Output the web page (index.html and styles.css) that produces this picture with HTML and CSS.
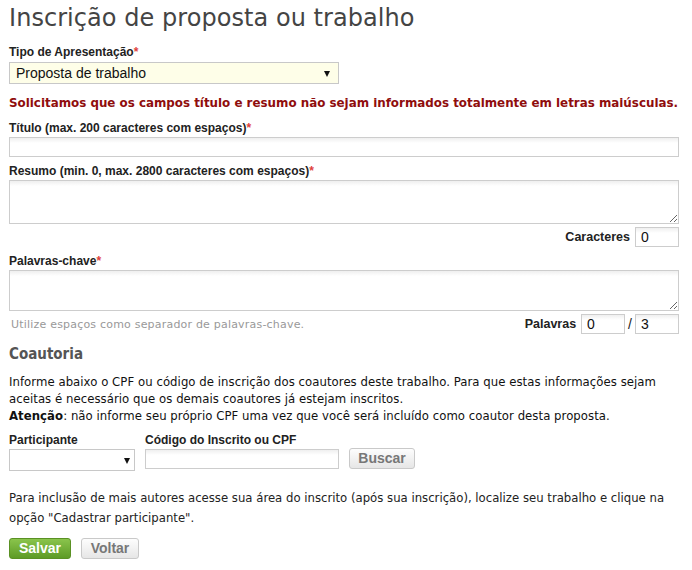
FILE: index.html
```html
<!DOCTYPE html>
<html lang="pt-BR">
<head>
<meta charset="utf-8">
<title>Inscrição de proposta ou trabalho</title>
<link rel="stylesheet" href="styles.css">
</head>
<body>
<div class="page">
  <h1 class="title">Inscrição de proposta ou trabalho</h1>

  <div class="field">
    <label class="lbl">Tipo de Apresentação<span class="req">*</span></label>
    <span class="select-wrap select-tipo">
      <select class="select yellow"><option>Proposta de trabalho</option></select>
    </span>
  </div>

  <p class="warning">Solicitamos que os campos título e resumo não sejam informados totalmente em letras maiúsculas.</p>

  <div class="field">
    <label class="lbl">Título (max. 200 caracteres com espaços)<span class="req">*</span></label>
    <input class="input full" type="text">
  </div>

  <div class="field">
    <label class="lbl">Resumo (min. 0, max. 2800 caracteres com espaços)<span class="req">*</span></label>
    <textarea class="input full area-resumo"></textarea>
    <div class="counter-row">
      <span class="lbl-inline">Caracteres</span>
      <input class="input small" type="text" value="0">
    </div>
  </div>

  <div class="field kw">
    <label class="lbl">Palavras-chave<span class="req">*</span></label>
    <textarea class="input full area-kw"></textarea>
    <div class="counter-row split">
      <span class="hint">Utilize espaços como separador de palavras-chave.</span>
      <span class="counter-group">
        <span class="lbl-inline">Palavras</span>
        <input class="input small" type="text" value="0">
        <span class="slash">/</span>
        <input class="input small" type="text" value="3">
      </span>
    </div>
  </div>

  <h2 class="section">Coautoria</h2>
  <p class="info">Informe abaixo o CPF ou código de inscrição dos coautores deste trabalho. Para que estas informações sejam aceitas é necessário que os demais coautores já estejam inscritos.<br><b>Atenção</b>: não informe seu próprio CPF uma vez que você será incluído como coautor desta proposta.</p>

  <div class="coauthor-row">
    <div class="col">
      <label class="lbl">Participante</label>
      <span class="select-wrap select-part">
        <select class="select"><option></option></select>
      </span>
    </div>
    <div class="col">
      <label class="lbl">Código do Inscrito ou CPF</label>
      <input class="input cpf" type="text">
    </div>
    <div class="col btn-col">
      <button class="btn" type="button">Buscar</button>
    </div>
  </div>

  <p class="note">Para inclusão de mais autores acesse sua área do inscrito (após sua inscrição), localize seu trabalho e clique na opção "Cadastrar participante".</p>

  <div class="actions">
    <button class="btn btn-green" type="button">Salvar</button>
    <button class="btn btn-back" type="button">Voltar</button>
  </div>
</div>
</body>
</html>
```

FILE: styles.css
```css
* { box-sizing: border-box; }
html, body { margin: 0; padding: 0; background: #fff; }
body { font-family: "Liberation Sans", Arial, sans-serif; color: #222; }

.page { padding: 3px 13px 0 9px; width: 692px; }

.title {
  font-family: "DejaVu Sans", Verdana, sans-serif;
  font-weight: normal;
  font-size: 24px;
  color: #444;
  margin: 0 0 12px 0;
  line-height: 30px;
  letter-spacing: 0.05px;
}

.field { display: flex; flex-direction: column; align-items: flex-start; }

.lbl {
  display: block;
  font-family: "Liberation Sans", Arial, sans-serif;
  font-weight: bold;
  font-size: 12px;
  line-height: 14px;
  color: #222;
  margin-bottom: 2px;
}
.req { color: #e0413a; }

.select-wrap { position: relative; display: inline-block; }
.select-wrap::after {
  content: "";
  position: absolute;
  top: 50%;
  margin-top: -2px;
  width: 0; height: 0;
  border-left: 3.5px solid transparent;
  border-right: 3.5px solid transparent;
  border-top: 6px solid #111;
  pointer-events: none;
}
.select {
  -webkit-appearance: none;
  appearance: none;
  display: block;
  border: 1px solid #c8c8c8;
  background: #fff;
  font-family: "Liberation Sans", Arial, sans-serif;
  font-size: 14px;
  color: #111;
  padding: 0 6px;
  border-radius: 0;
  margin: 0;
}
.select.yellow { background: #fefee8; }
.select-tipo { margin-top: 1px; }
.select-tipo .select { width: 330px; height: 22px; }
.select-tipo::after { right: 9px; }
.select-part .select { width: 126px; height: 22px; }
.select-part::after { right: 5px; }

.warning {
  font-family: "DejaVu Sans", Verdana, sans-serif;
  font-weight: bold;
  font-size: 11.88px;
  color: #8f0d0d;
  margin: 11px -10px 10px 0;
  line-height: 16px;
}

.input {
  border: 1px solid #cdcdcd;
  background: linear-gradient(#efefef, #fff 5px);
  font-family: "Liberation Sans", Arial, sans-serif;
  font-size: 14px;
  color: #111;
  padding: 0 5px;
  margin: 0;
  border-radius: 0;
  outline: none;
}
.full { width: 670px; }
input.full { height: 20px; margin-bottom: 7px; }
textarea.input { resize: vertical; display: block; }
.area-resumo { height: 44px; }
.area-kw { height: 41px; }

.counter-row {
  display: flex;
  justify-content: flex-end;
  align-items: center;
  margin-top: 3px;
  height: 20px;
  width: 670px;
}
.counter-row.split { justify-content: space-between; }
.field:nth-of-type(3) .counter-row { margin-bottom: 7px; }

.lbl-inline {
  font-weight: bold;
  font-size: 12.5px;
  color: #222;
  margin-right: 5px;
}
.small { width: 44px; height: 20px; padding: 0 5px; }
.counter-group { display: flex; align-items: center; }
.slash { font-size: 14px; margin: 0 3px; color: #222; }

.hint {
  font-family: "DejaVu Sans", Verdana, sans-serif;
  font-size: 11px;
  letter-spacing: 0.2px;
  color: #999;
  padding-left: 2px;
}

.section {
  font-family: "DejaVu Sans Condensed", Tahoma, sans-serif;
  font-weight: bold;
  font-size: 15px;
  color: #555;
  margin: 10px 0 0 0;
  line-height: 20px;
}

.info {
  font-family: "DejaVu Sans Condensed", Tahoma, sans-serif;
  font-size: 13px;
  letter-spacing: 0.05px;
  line-height: 17px;
  color: #111;
  margin: 9px -8px 9px 0;
}
.info b { font-weight: bold; }

.coauthor-row { display: flex; align-items: flex-start; }
.col { display: flex; flex-direction: column; align-items: flex-start; margin-right: 10px; }
.cpf { width: 194px; height: 20px; padding: 0 5px; }
.btn-col { padding-top: 15px; }

.btn {
  font-family: "Liberation Sans", Arial, sans-serif;
  font-weight: bold;
  font-size: 14px;
  color: #777;
  background: linear-gradient(#fdfdfd, #e6e6e6);
  border: 1px solid #c9c9c9;
  border-radius: 3px;
  height: 21px;
  padding: 0;
  line-height: 19px;
  margin: 0;
}
.btn-col .btn { width: 66px; }

.note {
  font-family: "DejaVu Sans", Verdana, sans-serif;
  font-size: 11.7px;
  line-height: 20px;
  color: #222;
  margin: 17px 0 10px 0;
}

.actions { display: flex; gap: 10px; }
.btn-green {
  color: #fff;
  background: linear-gradient(#8ac44c, #5d9b26);
  border-color: #5a9124;
  width: 62px;
}
.btn-back { width: 58px; }
```
